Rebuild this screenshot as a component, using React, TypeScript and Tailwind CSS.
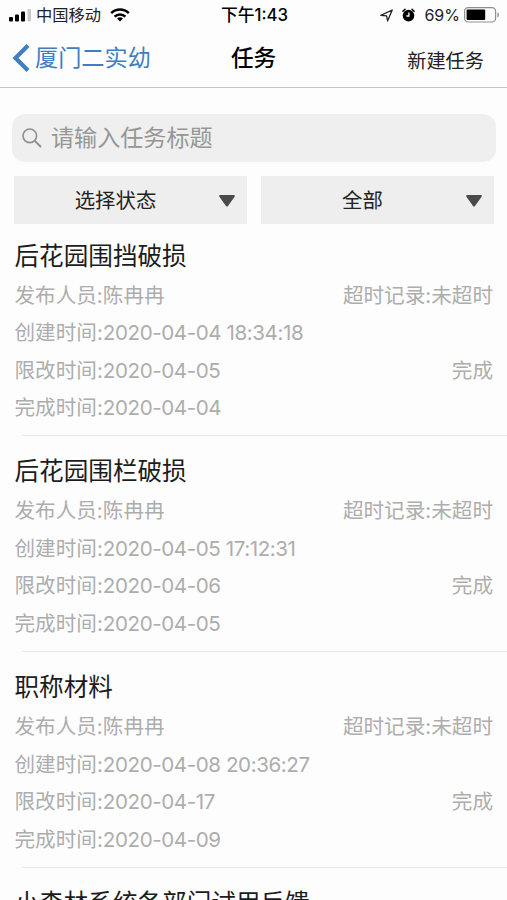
import React, { useState } from 'react';

interface TaskDetail {
  publisher: string;
  overtime: string;
  created: string;
  createdTime: string;
  deadline: string;
  finished: string;
  status: string;
}

interface Task {
  title: string;
  detail?: TaskDetail;
}

const tasks: Task[] = [
  {
    title: '后花园围挡破损',
    detail: {
      publisher: '陈冉冉',
      overtime: '未超时',
      created: '2020-04-04',
      createdTime: '18:34:18',
      deadline: '2020-04-05',
      finished: '2020-04-04',
      status: '完成',
    },
  },
  {
    title: '后花园围栏破损',
    detail: {
      publisher: '陈冉冉',
      overtime: '未超时',
      created: '2020-04-05',
      createdTime: '17:12:31',
      deadline: '2020-04-06',
      finished: '2020-04-05',
      status: '完成',
    },
  },
  {
    title: '职称材料',
    detail: {
      publisher: '陈冉冉',
      overtime: '未超时',
      created: '2020-04-08',
      createdTime: '20:36:27',
      deadline: '2020-04-17',
      finished: '2020-04-09',
      status: '完成',
    },
  },
  { title: '小森林系统各部门试用反馈' },
];

const SignalIcon = () => (
  <svg className="w-[23px] h-[14px]" viewBox="0 0 23 14">
    <rect x="0" y="9" width="4" height="4.5" rx="1" />
    <rect x="6" y="6.5" width="4" height="7" rx="1" />
    <rect x="12" y="3.5" width="4" height="10" rx="1" />
    <rect x="18.5" y="1" width="3.5" height="12.5" rx="1" fill="#c8c8c8" />
  </svg>
);

const WifiIcon = () => (
  <svg className="w-5 h-[14px]" viewBox="0 0 20 14" fill="none" stroke="#000" strokeWidth="2.5">
    <path d="M1.2 5.2a12.6 12.6 0 0 1 17.6 0" />
    <path d="M4.6 8.6a7.8 7.8 0 0 1 10.8 0" />
    <path d="M10 13.6 7 10.6a4.3 4.3 0 0 1 6 0z" fill="#000" stroke="none" />
  </svg>
);

const LocationIcon = () => (
  <svg className="w-[13px] h-[13px]" viewBox="0 0 13 13" fill="none" stroke="#222" strokeWidth="1.3" strokeLinejoin="round">
    <path d="M12.2 1 7.6 12 6.6 6.8.8 6.4z" />
  </svg>
);

const AlarmIcon = () => (
  <svg className="w-[13px] h-[14px]" viewBox="0 0 13 14">
    <circle cx="6.5" cy="7.6" r="5.8" />
    <path d="M.9 3.2 3 1.2M12.1 3.2 10 1.2" stroke="#000" strokeWidth="1.5" strokeLinecap="round" />
    <path d="M6.9 4.4v3.6H4.4" stroke="#fff" strokeWidth="1.3" fill="none" />
  </svg>
);

const BatteryIcon = () => (
  <svg className="w-9 h-4" viewBox="0 0 36 16">
    <rect x=".6" y=".6" width="31" height="14.4" rx="3.6" fill="none" stroke="#8f8f8f" strokeWidth="1.2" />
    <rect x="2.6" y="2.6" width="18.6" height="10.4" rx="1" />
    <path d="M33.4 5.2c2 .8 2 4.4 0 5.2z" fill="#8f8f8f" />
  </svg>
);

const SearchIcon = () => (
  <svg className="w-5 h-5" viewBox="0 0 20 20" fill="none" stroke="#8e8e93" strokeWidth="1.6">
    <circle cx="7.8" cy="7.8" r="6.8" />
    <path d="M12.6 12.6 19 19" strokeWidth="2" />
  </svg>
);

const StatusBar = () => (
  <div className="grid grid-cols-[minmax(0,1fr)_auto_minmax(0,1fr)] items-center h-[30px] pl-[9px] pr-[7px] text-[16px] leading-none">
    <div className="flex items-center">
      <SignalIcon />
      <span className="ml-[4px] text-[16.3px] text-[#222]">中国移动</span>
      <span className="ml-[9px]"><WifiIcon /></span>
    </div>
    <span className="text-[16.8px] font-medium">下午1:43</span>
    <div className="flex items-center justify-end">
      <LocationIcon />
      <span className="ml-[9px]"><AlarmIcon /></span>
      <span className="ml-[9px] mr-[4px] text-[#222]">69%</span>
      <BatteryIcon />
    </div>
  </div>
);

const NavBar = () => (
  <header className="grid grid-cols-[minmax(0,1fr)_auto_minmax(0,1fr)] items-center h-[58px] px-3 border-b border-[#c4c4c4]">
    <button className="flex items-center pb-[2px] text-[#3f7fc1]">
      <svg className="w-[18px] h-7" viewBox="0 0 18 28" fill="none" stroke="currentColor" strokeWidth="4.2">
        <path d="M16 1.5 3.5 14 16 26.5" />
      </svg>
      <span className="ml-[5px] text-[23.2px] leading-7">厦门二实幼</span>
    </button>
    <h1 className="pb-[2px] text-[22.6px] leading-7 font-medium">任务</h1>
    <button className="justify-self-end pt-[4px] pr-[11px] text-[19.2px] leading-6 text-[#222]">新建任务</button>
  </header>
);

const Select = ({ label }: { label: string }) => (
  <button className="relative flex-1 flex items-center justify-center h-12 pt-[3px] pr-[30px] bg-[#eeeeee] text-[20.4px] text-[#222]">
    {label}
    <svg className="absolute right-[12.5px] top-[18.5px] w-4 h-3" viewBox="0 0 16 12" fill="#4a4a4a">
      <path d="M1.3 0h13.4c1 0 1.5 1 .9 1.8L9 11c-.5.7-1.5.7-2 0L.4 1.8C-.2 1 .3 0 1.3 0z" />
    </svg>
  </button>
);

const Row = ({ label, value, right }: { label: string; value: string; right?: string }) => (
  <div className="flex justify-between">
    <span>
      {label}:<span className="tracking-[-0.43px]">{value}</span>
    </span>
    {right && <span>{right}</span>}
  </div>
);

const TaskItem = ({ task }: { task: Task }) => {
  const { title, detail } = task;

  return (
    <li className="group">
      <div className="pt-[15px] group-first:pt-[11.6px] pb-[8.3px] pl-[14.5px] pr-[14px]">
        <h2 className="h-[41px] leading-10 text-[24.6px] text-[#1c1c1c]">{title}</h2>
        {detail && (
          <div className="text-[20.6px] leading-[37.6px] text-[#adadad]">
            <div className="flex justify-between">
              <span>发布人员:{detail.publisher}</span>
              <span>超时记录:{detail.overtime}</span>
            </div>
            <Row label="创建时间" value={`${detail.created} ${detail.createdTime}`} />
            <Row label="限改时间" value={detail.deadline} right={detail.status} />
            <Row label="完成时间" value={detail.finished} />
          </div>
        )}
      </div>
      {detail && <div className="ml-[22px] h-px bg-[#e6e6e6]" />}
    </li>
  );
};

const App = () => {
  const [keyword, setKeyword] = useState('');

  return (
    <div className="h-[900px] w-full overflow-hidden bg-[#fdfdfd] text-black font-[Inter,'Noto_Sans_CJK_SC',sans-serif]">
      <StatusBar />
      <NavBar />
      <div className="mt-[26px] ml-3 mr-[11px] flex items-center h-12 pl-[10px] rounded-[13px] bg-[#efefef]">
        <SearchIcon />
        <input
          className="ml-[9px] flex-1 bg-transparent outline-none text-[23.1px] leading-8 placeholder:text-[#969696]"
          placeholder="请输入任务标题"
          value={keyword}
          onChange={(e) => setKeyword(e.target.value)}
        />
      </div>
      <div className="mt-[14px] ml-[14px] mr-[13px] flex gap-[14px]">
        <Select label="选择状态" />
        <Select label="全部" />
      </div>
      <ul>
        {tasks.map((task) => (
          <TaskItem key={task.title} task={task} />
        ))}
      </ul>
    </div>
  );
};

export default App;
